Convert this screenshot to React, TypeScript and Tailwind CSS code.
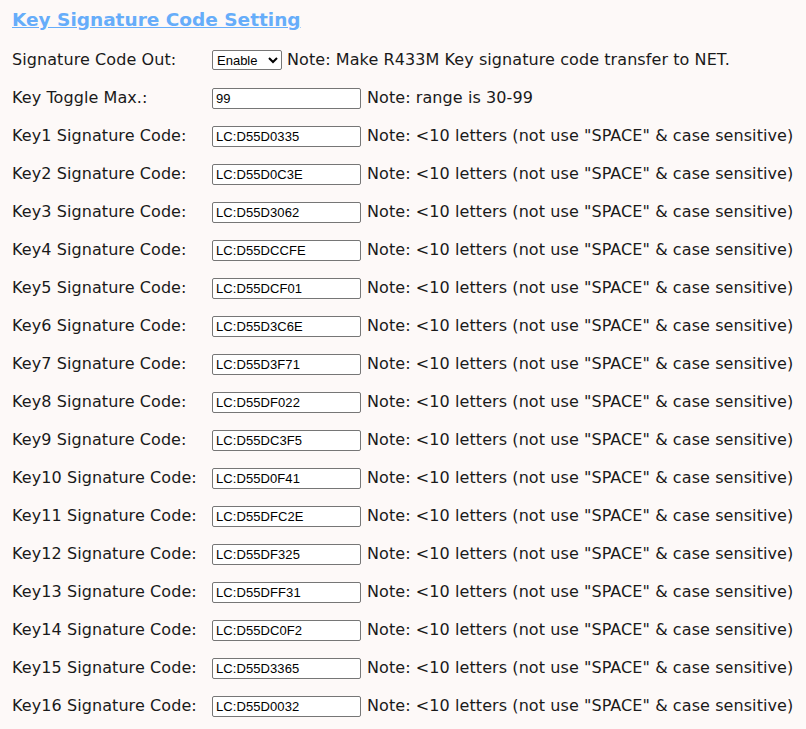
import React from "react";

const codes = [
  "LC:D55D0335",
  "LC:D55D0C3E",
  "LC:D55D3062",
  "LC:D55DCCFE",
  "LC:D55DCF01",
  "LC:D55D3C6E",
  "LC:D55D3F71",
  "LC:D55DF022",
  "LC:D55DC3F5",
  "LC:D55D0F41",
  "LC:D55DFC2E",
  "LC:D55DF325",
  "LC:D55DFF31",
  "LC:D55DC0F2",
  "LC:D55D3365",
  "LC:D55D0032",
];

const inputCls =
  "w-[149px] h-[21px] border border-[#767676] rounded-[2px] bg-white px-[3px] text-[13px] text-black outline-none font-['Liberation_Sans',Arial,sans-serif]";

const App = () => {
  return (
    <div className="min-h-screen w-[806px] bg-[#fdf9f8] px-3 text-[16px] tracking-[0.08px] text-[#1a1a1a] font-['DejaVu_Sans',Verdana,sans-serif]">
      <div className="h-[41px] pt-[7px]">
        <a
          href="#"
          className="text-[18.5px] font-bold text-[#66adfa] underline leading-[26px] tracking-normal"
        >
          Key Signature Code Setting
        </a>
      </div>
      <div className="flex flex-col">
        <div className="flex h-[38px] items-center">
          <div className="w-[200px]">Signature Code Out:</div>
          <select
            defaultValue="Enable"
            className="h-[20px] w-[70px] border border-[#767676] rounded-[2px] bg-white text-[13px] tracking-normal text-black font-['Liberation_Sans',Arial,sans-serif]"
          >
            <option>Enable</option>
            <option>Disable</option>
          </select>
          <span className="ml-[5px]">
            Note: Make R433M Key signature code transfer to NET.
          </span>
        </div>
        <div className="flex h-[38px] items-center">
          <div className="w-[200px]">Key Toggle Max.:</div>
          <input type="text" defaultValue="99" className={inputCls} />
          <span className="ml-[6px]">Note: range is 30-99</span>
        </div>
        {codes.map((code, i) => (
          <div key={i} className="flex h-[38px] items-center">
            <div className="w-[200px]">Key{i + 1} Signature Code:</div>
            <input type="text" defaultValue={code} className={inputCls} />
            <span className="ml-[6px] whitespace-nowrap">
              Note: &lt;10 letters (not use "SPACE" &amp; case sensitive)
            </span>
          </div>
        ))}
      </div>
    </div>
  );
};

export default App;
